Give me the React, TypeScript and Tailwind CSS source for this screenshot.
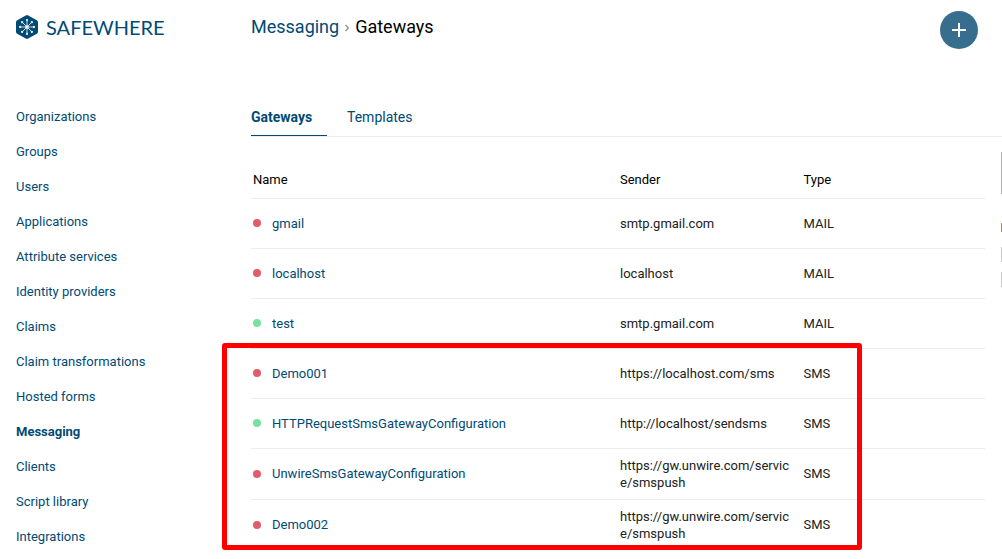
import React from "react";

type Gateway = {
  name: string;
  sender: string;
  type: "MAIL" | "SMS";
  active: boolean;
};

const navItems = [
  "Organizations",
  "Groups",
  "Users",
  "Applications",
  "Attribute services",
  "Identity providers",
  "Claims",
  "Claim transformations",
  "Hosted forms",
  "Messaging",
  "Clients",
  "Script library",
  "Integrations",
];

const mailGateways: Gateway[] = [
  { name: "gmail", sender: "smtp.gmail.com", type: "MAIL", active: false },
  { name: "localhost", sender: "localhost", type: "MAIL", active: false },
  { name: "test", sender: "smtp.gmail.com", type: "MAIL", active: true },
];

const smsGateways: Gateway[] = [
  { name: "Demo001", sender: "https://localhost.com/sms", type: "SMS", active: false },
  { name: "HTTPRequestSmsGatewayConfiguration", sender: "http://localhost/sendsms", type: "SMS", active: true },
  { name: "UnwireSmsGatewayConfiguration", sender: "https://gw.unwire.com/service/smspush", type: "SMS", active: false },
  { name: "Demo002", sender: "https://gw.unwire.com/service/smspush", type: "SMS", active: false },
];

const spokes = [0, 45, 90, 135, 180, 225, 270, 315];

function Logo() {
  return (
    <a href="#home" className="flex items-center gap-2 text-[#004a75]">
      <svg viewBox="0 0 22 24" className="h-6 w-[22px]" aria-hidden="true">
        <path
          d="M9.8 0.4Q11 -0.2 12.2 0.4L20.8 5.2Q22 5.9 22 7.2V16.8Q22 18.1 20.8 18.8L12.2 23.6Q11 24.2 9.8 23.6L1.2 18.8Q0 18.1 0 16.8V7.2Q0 5.9 1.2 5.2Z"
          fill="currentColor"
        />
        {spokes.map((angle) => (
          <g key={angle} transform={`rotate(${angle} 11 12)`}>
            <line x1="11" y1="12" x2="11" y2="5.2" stroke="#dce8ef" strokeWidth="0.9" />
            <circle cx="11" cy="5.1" r="1.15" fill="#e8f0f5" />
          </g>
        ))}
        <circle cx="11" cy="12" r="1.7" fill="#ffffff" />
      </svg>
      <span className="font-['Lato',sans-serif] text-xl leading-6">SAFEWHERE</span>
    </a>
  );
}

function GatewayRow({ gateway }: { gateway: Gateway }) {
  return (
    <tr className="h-[50px] border-b border-[#ededed] last:border-b-0">
      <td className="pl-0.5">
        <div className="flex items-center gap-[11px]">
          <span
            className={
              gateway.active
                ? "size-2 shrink-0 rounded-full bg-[#78e0a0]"
                : "size-2 shrink-0 rounded-full bg-[#e25b6c]"
            }
          />
          <a href="#gateway" className="text-[#004a75]">
            {gateway.name}
          </a>
        </div>
      </td>
      <td className="py-2 pr-3 pl-0.5 break-all">{gateway.sender}</td>
      <td className="pl-0.5">{gateway.type}</td>
    </tr>
  );
}

export default function App() {
  return (
    <div className="flex min-h-screen overflow-hidden bg-white font-['Roboto',sans-serif] text-[13px] leading-[17px] text-[#212121]">
      <aside className="w-[251px] shrink-0 pl-4">
        <div className="flex h-[54px] items-center">
          <Logo />
        </div>
        <nav aria-label="Main" className="pt-[45px]">
          <ul>
            {navItems.map((item) => (
              <li key={item} className="flex h-[35px] items-center">
                <a
                  href="#section"
                  className={item === "Messaging" ? "font-bold text-[#004a75]" : "text-[#004a75]"}
                >
                  {item}
                </a>
              </li>
            ))}
          </ul>
        </nav>
      </aside>

      <main className="min-w-0 flex-1">
        <header className="flex h-[98px] items-start justify-between pt-[11px] pr-6">
          <nav aria-label="Breadcrumb" className="flex h-8 items-center gap-1.5 text-lg">
            <a href="#messaging" className="text-[#004a75]">
              Messaging
            </a>
            <svg viewBox="0 0 4 8" className="mt-0.5 h-2 w-1" aria-hidden="true">
              <path d="M0.5 0.8L3.4 4L0.5 7.2" fill="none" stroke="#8a8a8a" strokeWidth="1.2" />
            </svg>
            <h1 className="text-black">Gateways</h1>
          </nav>
          <button
            type="button"
            aria-label="Add gateway"
            className="flex size-[38px] items-center justify-center rounded-full bg-[#376e8e] text-white"
          >
            <svg viewBox="0 0 14 14" className="size-3.5" aria-hidden="true">
              <path d="M7 0V14M0 7H14" stroke="currentColor" strokeWidth="2" />
            </svg>
          </button>
        </header>

        <div className="flex h-[39px] gap-5 border-b border-[#ededed] text-sm">
          <a
            href="#gateways"
            aria-current="page"
            className="flex w-[76px] items-center border-b border-[#004a75] font-bold text-[#004a75]"
          >
            Gateways
          </a>
          <a href="#templates" className="flex items-center text-[#004a75]">
            Templates
          </a>
        </div>

        <div className="flex justify-between">
          <div className="relative min-w-0 flex-1 pt-6">
            <table className="w-full table-fixed text-left">
              <colgroup>
                <col className="w-1/2" />
                <col className="w-1/4" />
                <col className="w-1/4" />
              </colgroup>
              <thead className="text-black">
                <tr className="h-[37px] border-b border-[#ededed]">
                  <th scope="col" className="pl-0.5 font-normal">Name</th>
                  <th scope="col" className="pl-0.5 font-normal">Sender</th>
                  <th scope="col" className="pl-0.5 font-normal">Type</th>
                </tr>
              </thead>
              <tbody>
                {[...mailGateways, ...smsGateways].map((gateway) => (
                  <GatewayRow key={gateway.name} gateway={gateway} />
                ))}
              </tbody>
            </table>
            <div className="pointer-events-none absolute top-[206px] right-[123px] bottom-0 -left-[29px] rounded-[3px] border-[5px] border-[#ff0000]" />
          </div>
          <div className="flex w-[17px] shrink-0 flex-col items-end pt-[15px]" aria-hidden="true">
            <span className="h-[42px] w-px bg-[#b0b0b0]" />
            <span className="mt-[29px] h-[9px] w-px bg-[#c97838]" />
            <span className="mt-[15px] h-[15px] w-px bg-[#cacaca]" />
            <span className="mt-2.5 h-[15px] w-px bg-[#cacaca]" />
          </div>
        </div>
      </main>
    </div>
  );
}
